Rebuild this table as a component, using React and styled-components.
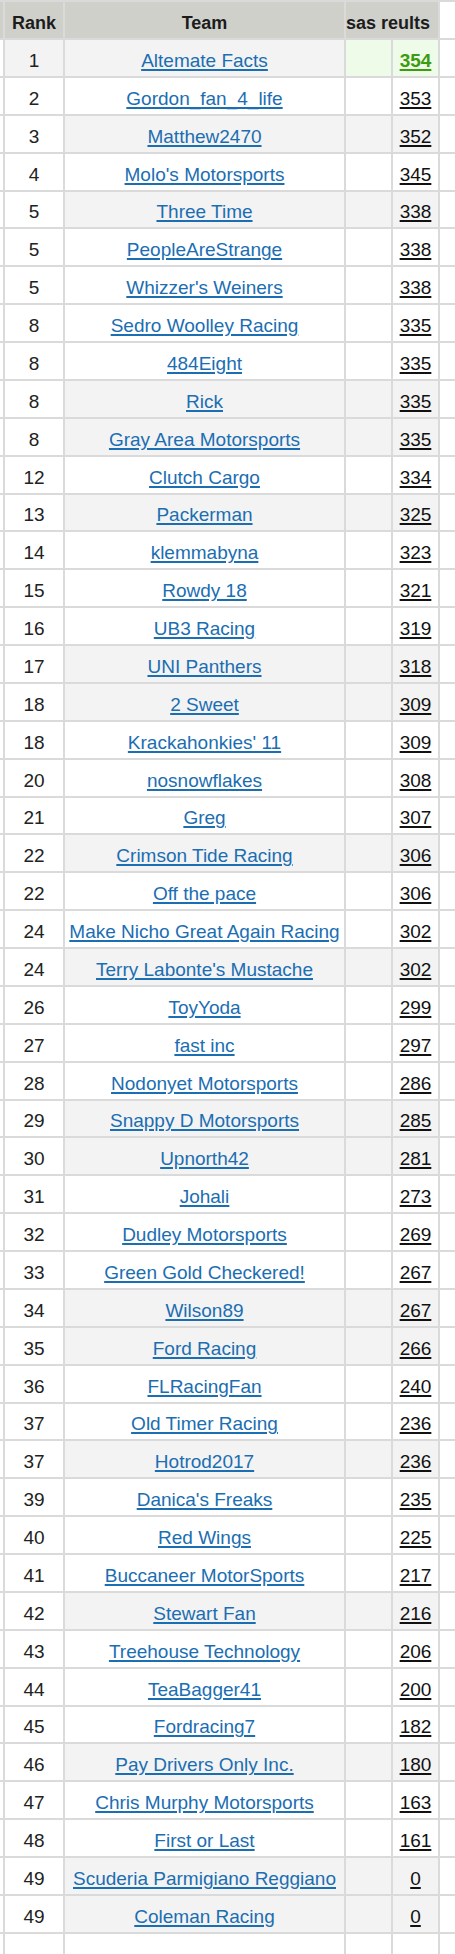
import React from 'react';
import styled, { createGlobalStyle } from 'styled-components';

const GlobalStyle = createGlobalStyle`
  body {
    margin: 0;
    background: #fff;
    font-family: "Liberation Sans", Arial, Helvetica, sans-serif;
  }
`;

const standings = [
  [1, 'Altemate Facts', 354],
  [2, 'Gordon_fan_4_life', 353],
  [3, 'Matthew2470', 352],
  [4, "Molo's Motorsports", 345],
  [5, 'Three Time', 338],
  [5, 'PeopleAreStrange', 338],
  [5, "Whizzer's Weiners", 338],
  [8, 'Sedro Woolley Racing', 335],
  [8, '484Eight', 335],
  [8, 'Rick', 335],
  [8, 'Gray Area Motorsports', 335],
  [12, 'Clutch Cargo', 334],
  [13, 'Packerman', 325],
  [14, 'klemmabyna', 323],
  [15, 'Rowdy 18', 321],
  [16, 'UB3 Racing', 319],
  [17, 'UNI Panthers', 318],
  [18, '2 Sweet', 309],
  [18, "Krackahonkies' 11", 309],
  [20, 'nosnowflakes', 308],
  [21, 'Greg', 307],
  [22, 'Crimson Tide Racing', 306],
  [22, 'Off the pace', 306],
  [24, 'Make Nicho Great Again Racing', 302],
  [24, "Terry Labonte's Mustache", 302],
  [26, 'ToyYoda', 299],
  [27, 'fast inc', 297],
  [28, 'Nodonyet Motorsports', 286],
  [29, 'Snappy D Motorsports', 285],
  [30, 'Upnorth42', 281],
  [31, 'Johali', 273],
  [32, 'Dudley Motorsports', 269],
  [33, 'Green Gold Checkered!', 267],
  [34, 'Wilson89', 267],
  [35, 'Ford Racing', 266],
  [36, 'FLRacingFan', 240],
  [37, 'Old Timer Racing', 236],
  [37, 'Hotrod2017', 236],
  [39, "Danica's Freaks", 235],
  [40, 'Red Wings', 225],
  [41, 'Buccaneer MotorSports', 217],
  [42, 'Stewart Fan', 216],
  [43, 'Treehouse Technology', 206],
  [44, 'TeaBagger41', 200],
  [45, 'Fordracing7', 182],
  [46, 'Pay Drivers Only Inc.', 180],
  [47, 'Chris Murphy Motorsports', 163],
  [48, 'First or Last', 161],
  [49, 'Scuderia Parmigiano Reggiano', 0],
  [49, 'Coleman Racing', 0],
];

// rows (1-based) whose team/score cells carry the grey band
const banded = new Set([1, 3, 5, 10, 11, 13, 17, 18, 22, 25, 29, 30, 34, 35, 38, 42, 46, 49, 50]);

const GREY = '#f3f3f3';
const GREEN = '#eefbe8';
const WHITE = '#ffffff';

const Sheet = styled.div`
  display: grid;
  grid-template-columns: 3px 58px 279px 45px 45px 1fr;
  grid-template-rows: 36px;
  grid-auto-rows: 35.88px;
  gap: 2px;
  padding-top: 2px;
  width: 455px;
  background: #dadada;
`;

const Edge = styled.div`
  background: ${p => p.$bg || WHITE};
`;

const HeadCell = styled.div`
  background: #d0d0cb;
  display: flex;
  align-items: center;
  justify-content: center;
  padding-top: 6px;
  box-sizing: border-box;
  font-size: 18px;
  font-weight: bold;
  color: #1c1c1c;
  white-space: nowrap;
`;

const HeadScore = styled(HeadCell)`
  grid-column: span 2;
  justify-content: flex-end;
  padding-right: 8px;
`;

const RankCell = styled.div`
  background: ${p => p.$bg};
  display: flex;
  align-items: center;
  justify-content: center;
  padding-top: 6px;
  box-sizing: border-box;
  font-size: 19px;
  color: #222;
`;

const TeamCell = styled(RankCell)`
  white-space: nowrap;
  overflow: hidden;
`;

const SpareCell = styled.div`
  background: ${p => p.$bg};
`;

const ScoreCell = styled(RankCell)``;

const TeamLink = styled.a`
  color: #1b6eb2;
  text-decoration: underline;
  text-decoration-thickness: 1.6px;
  text-underline-offset: 2px;
  cursor: pointer;
`;

const ScoreLink = styled.a`
  color: ${p => (p.$lead ? '#3b9c10' : '#111')};
  font-weight: ${p => (p.$lead ? 'bold' : 'normal')};
  text-decoration: underline;
  text-decoration-thickness: 1.8px;
  text-underline-offset: 2px;
  cursor: pointer;
`;

const Row = ({ index, rank, team, score }) => {
  const lead = index === 1;
  const band = banded.has(index) ? GREY : WHITE;
  const side = lead ? GREEN : band;
  return (
    <>
      <Edge />
      <RankCell $bg={lead ? GREY : WHITE}>{rank}</RankCell>
      <TeamCell $bg={band}>
        <TeamLink>{team}</TeamLink>
      </TeamCell>
      <SpareCell $bg={side} />
      <ScoreCell $bg={side}>
        <ScoreLink $lead={lead}>{score}</ScoreLink>
      </ScoreCell>
      <Edge />
    </>
  );
};

export default function App() {
  return (
    <>
      <GlobalStyle />
      <Sheet>
        <Edge $bg="#d0d0cb" />
        <HeadCell>Rank</HeadCell>
        <HeadCell>Team</HeadCell>
        <HeadScore>sas reults</HeadScore>
        <Edge />
        {standings.map(([rank, team, score], i) => (
          <Row key={team} index={i + 1} rank={rank} team={team} score={score} />
        ))}
        <Edge />
        <SpareCell $bg={WHITE} />
        <SpareCell $bg={WHITE} />
        <SpareCell $bg={WHITE} />
        <SpareCell $bg={WHITE} />
        <Edge />
      </Sheet>
    </>
  );
}
